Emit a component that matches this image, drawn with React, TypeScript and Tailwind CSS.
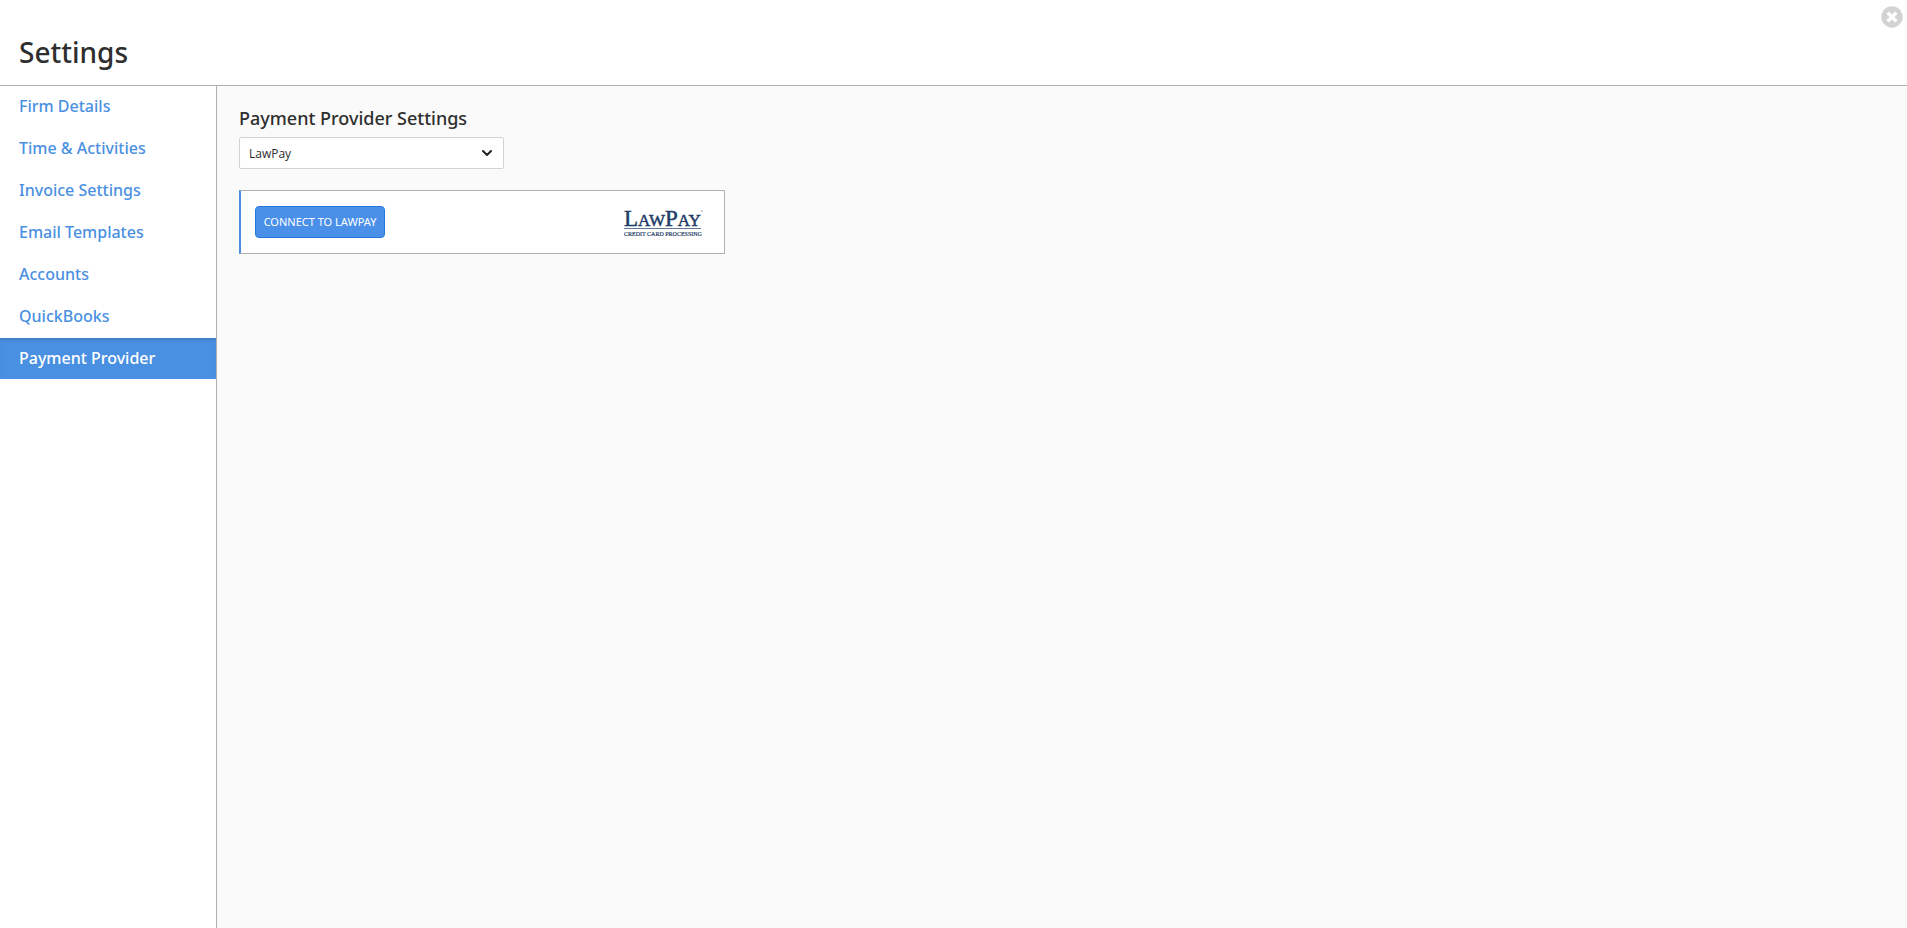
import { useState } from "react";
import { FaTimesCircle } from "react-icons/fa";
import clsx from "clsx";

const sections = [
  "Firm Details",
  "Time & Activities",
  "Invoice Settings",
  "Email Templates",
  "Accounts",
  "QuickBooks",
  "Payment Provider",
];

function LawPayLogo() {
  return (
    <svg
      width="84"
      height="36"
      viewBox="0 0 84 36"
      role="img"
      aria-label="LawPay credit card processing"
      className="overflow-visible fill-[#1f3d66] font-['Liberation_Serif',serif]"
    >
      <text x="0" y="22" fontSize="23" stroke="#1f3d66" strokeWidth="0.5">
        L<tspan fontSize="17">AW</tspan>P<tspan fontSize="17">AY</tspan>
      </text>
      <rect x="0" y="24" width="77" height="1" fill="#5f7897" />
      <text x="0" y="32" fontSize="6" stroke="#1f3d66" strokeWidth="0.2">
        CREDIT CARD PROCESSING
      </text>
      <circle cx="78" cy="7" r="0.8" fill="#7f93ab" />
    </svg>
  );
}

export default function App() {
  const [active, setActive] = useState("Payment Provider");
  const [provider, setProvider] = useState("lawpay");

  return (
    <div className="flex min-h-screen flex-col bg-white font-['Noto_Sans','Open_Sans',sans-serif] text-[#2e2e2e]">
      <header className="flex justify-between border-b border-[#b0b0b0] pt-1.5 pr-1 pb-2.5 pl-[19px]">
        <h1 className="mt-6 text-[28px] leading-[45px] font-medium">Settings</h1>
        <button type="button" aria-label="Close" className="self-start text-[#d3d3d3]">
          <FaTimesCircle size={22} />
        </button>
      </header>

      <div className="flex flex-1">
        <nav className="w-[217px] shrink-0 border-r border-[#b0b0b0]">
          <ul className="flex flex-col gap-px">
            {sections.map((section) => (
              <li key={section}>
                <a
                  href="#"
                  onClick={() => setActive(section)}
                  className={clsx(
                    "block pl-[19px] text-base leading-[41px] font-medium",
                    section === active
                      ? "bg-[#4a90e2] text-white shadow-[inset_0_4px_5px_-3px_rgba(0,0,0,0.2)]"
                      : "text-[#4a90e2]",
                  )}
                >
                  {section}
                </a>
              </li>
            ))}
          </ul>
        </nav>

        <main className="flex-1 bg-[#fafafa] px-[22px] pt-5">
          <label htmlFor="provider" className="block text-lg leading-[25px] font-medium">
            Payment Provider Settings
          </label>

          <div className="relative mt-1.5 w-[265px]">
            <select
              id="provider"
              value={provider}
              onChange={(e) => setProvider(e.target.value)}
              className="block h-8 w-full appearance-none rounded-xs border border-[#d3d3d3] bg-white pt-px pl-[9px] font-['Open_Sans',sans-serif] text-xs"
            >
              <option value="lawpay">LawPay</option>
            </select>
            <svg
              viewBox="0 0 12 8"
              className="pointer-events-none absolute top-3 right-[11px] h-2 w-3 fill-none stroke-[#222]"
              strokeWidth="2"
              strokeLinecap="round"
              strokeLinejoin="round"
            >
              <path d="M2 2l4 4 4-4" />
            </svg>
          </div>

          <section className="mt-[21px] flex h-16 w-full max-w-[486px] items-center justify-between border border-l-2 border-[#b0b0b0] border-l-[#4a90e2] bg-white pr-4 pl-3.5">
            <button
              type="button"
              className="h-8 w-[130px] rounded-[4px] border border-[#2377de] bg-[#4a90e8] text-[11px] whitespace-nowrap text-white uppercase"
            >
              Connect to LawPay
            </button>
            <LawPayLogo />
          </section>
        </main>
      </div>
    </div>
  );
}
